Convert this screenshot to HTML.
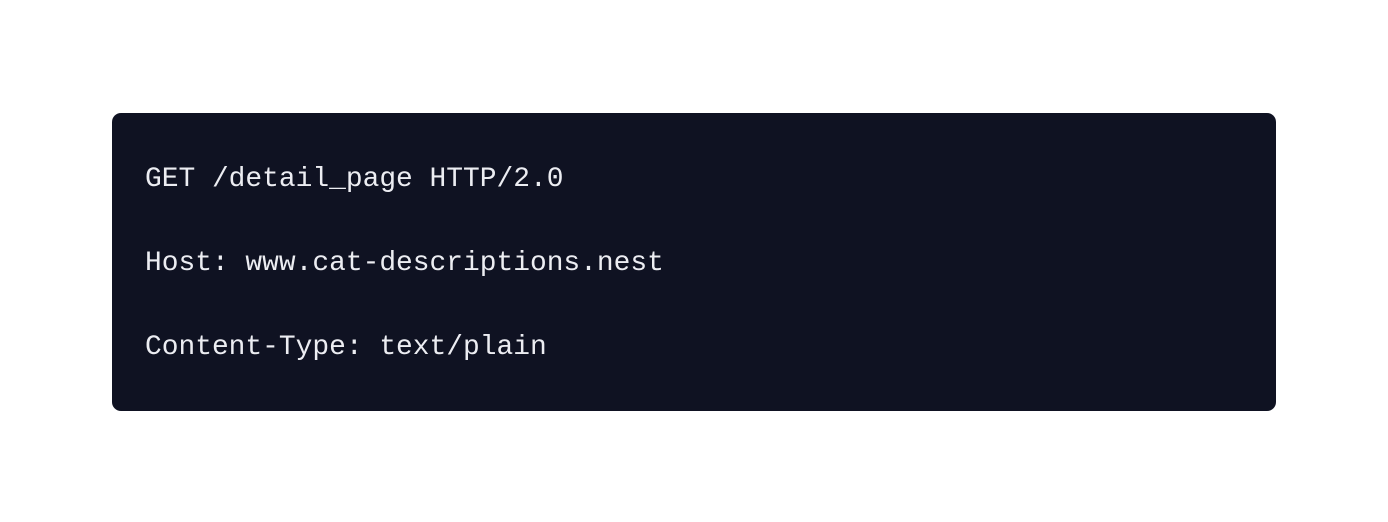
<!DOCTYPE html>
<html><head><style>
html,body{margin:0;padding:0;background:#fff;width:1388px;height:522px;overflow:hidden}
.box{position:absolute;left:112px;top:113px;width:1164px;height:298px;background:#0f1222;border-radius:9px}
.l{position:absolute;left:145px;font-family:"Liberation Mono",monospace;font-size:27.9px;color:#ecedf2;line-height:1;white-space:pre}
</style></head><body>
<div class="box"></div>
<div class="l" style="top:166px">GET /detail_page HTTP/2.0</div>
<div class="l" style="top:250px">Host: www.cat-descriptions.nest</div>
<div class="l" style="top:334px">Content-Type: text/plain</div>
</body></html>
